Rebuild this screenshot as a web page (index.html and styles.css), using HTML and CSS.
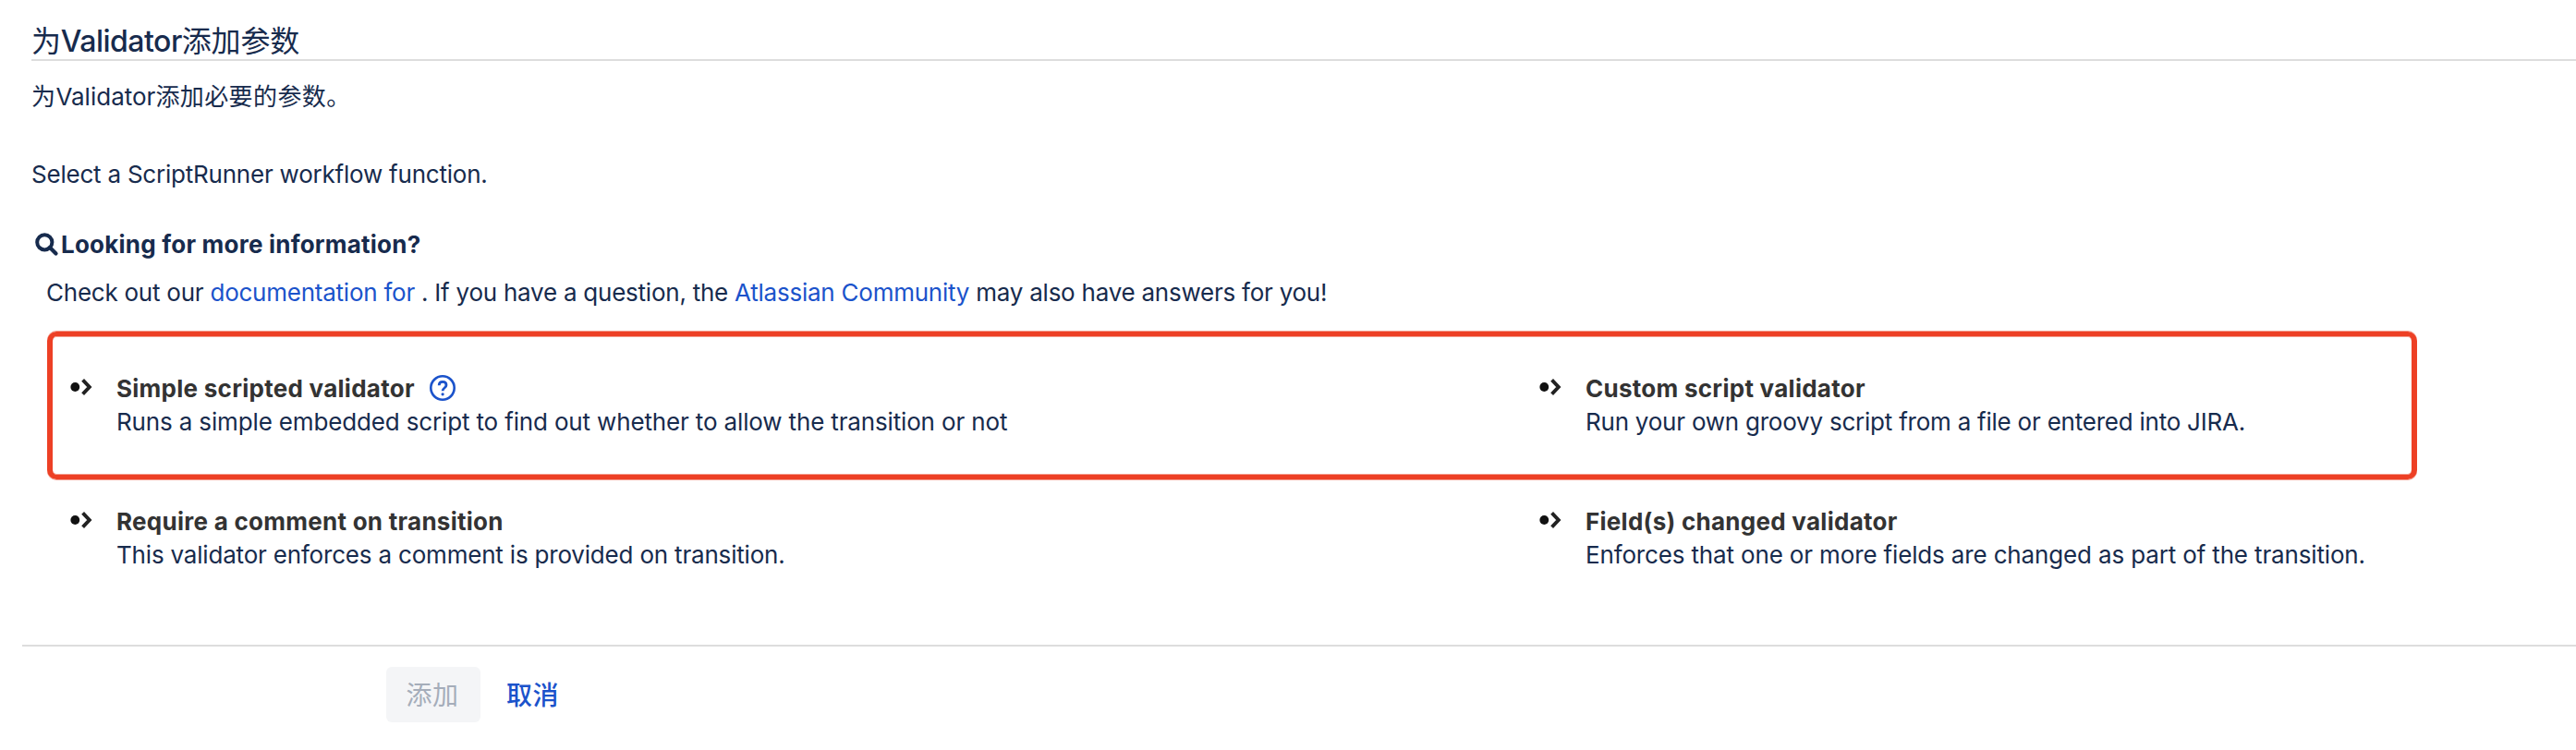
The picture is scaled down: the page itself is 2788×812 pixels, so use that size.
FILE: index.html
```html
<!DOCTYPE html>
<html lang="zh-CN">
<head>
<meta charset="utf-8">
<title>为Validator添加参数</title>
<link rel="stylesheet" href="styles.css">
</head>
<body>
<svg class="defs" aria-hidden="true">
  <symbol id="bullet" viewBox="0 0 28 24">
    <circle cx="7.3" cy="12" r="4.9" fill="#111"/>
    <path d="M15.6 4.4l7.2 7.6-7.2 7.6" fill="none" stroke="#222" stroke-width="3.9"/>
  </symbol>
</svg>
<main class="page">
  <h2 class="title">为<span class="title-latin">Validator</span>添加参数</h2>
  <p class="desc"><span class="cjk">为</span>Validator<span class="cjk">添加必要的参数。</span></p>
  <p class="prompt">Select a ScriptRunner workflow function.</p>
  <h3 class="info-title">
    <svg class="search" viewBox="0 0 26 26"><circle cx="10.3" cy="10.3" r="8.1" fill="none" stroke="currentColor" stroke-width="4"/><path d="M16 16l6.5 6.5" stroke="currentColor" stroke-width="4.2" stroke-linecap="round"/></svg>
    <span>Looking for more information?</span>
  </h3>
  <p class="info">Check out our <a href="#">documentation for</a> . If you have a question, the <a href="#">Atlassian Community</a> may also have answers for you!</p>
  <section class="row highlighted">
    <article class="option">
      <svg class="bullet"><use href="#bullet"/></svg>
      <div>
        <h4 class="name">Simple scripted validator
          <svg class="help" viewBox="0 0 28 28"><circle cx="14" cy="14" r="12.7" fill="none" stroke="currentColor" stroke-width="2.6"/><path d="M10.2 11.2c0-2.3 1.6-3.8 3.9-3.8s3.9 1.5 3.9 3.6c0 3-3.9 3-3.9 6.2" fill="none" stroke="currentColor" stroke-width="2.8"/><circle cx="14.1" cy="20.8" r="1.6" fill="currentColor"/></svg>
        </h4>
        <p class="text loose">Runs a simple embedded script to find out whether to allow the transition or not</p>
      </div>
    </article>
    <article class="option">
      <svg class="bullet"><use href="#bullet"/></svg>
      <div>
        <h4 class="name">Custom script validator</h4>
        <p class="text tight">Run your own groovy script from a file or entered into JIRA.</p>
      </div>
    </article>
  </section>
  <section class="row">
    <article class="option">
      <svg class="bullet"><use href="#bullet"/></svg>
      <div>
        <h4 class="name">Require a comment on transition</h4>
        <p class="text">This validator enforces a comment is provided on transition.</p>
      </div>
    </article>
    <article class="option">
      <svg class="bullet"><use href="#bullet"/></svg>
      <div>
        <h4 class="name">Field(s) changed validator</h4>
        <p class="text loose">Enforces that one or more fields are changed as part of the transition.</p>
      </div>
    </article>
  </section>
</main>
<footer class="actions">
  <button class="add" disabled>添加</button>
  <a class="cancel" href="#">取消</a>
</footer>
</body>
</html>
```

FILE: styles.css
```css
* { box-sizing: border-box; }
body {
  margin: 0;
  height: 812px;
  overflow: hidden;
  background: #fff;
  color: #172b4d;
  font: 400 26px/36px Inter, "Noto Sans CJK SC", sans-serif;
  letter-spacing: -0.22px;
}
h2, h3, h4, p { margin: 0; }
a { color: #1b53cb; text-decoration: none; }
.defs { display: block; width: 0; height: 0; }
.page { padding: 25px 0 0 34px; }
.title {
  height: 41px;
  border-bottom: 2px solid #ddd;
  font-size: 32px;
  line-height: 40px;
  font-weight: 400;
  letter-spacing: -0.2px;
}
.title-latin { font-weight: 500; letter-spacing: -0.5px; }
.desc { margin-top: 21px; letter-spacing: 0; }
.cjk { letter-spacing: 0.4px; }
.prompt { margin-top: 48px; }
.info-title {
  display: flex;
  gap: 2px;
  margin-top: 40px;
  padding-left: 4px;
  font-size: 26px;
  font-weight: 700;
  letter-spacing: 0.22px;
}
.search { width: 26px; height: 26px; margin-top: 5px; }
.info { margin: 16px 0 24px; padding-left: 16px; letter-spacing: -0.24px; }
.row {
  display: grid;
  grid-template-columns: 1590px 1fr;
  width: 2565px;
  margin-left: 17px;
  padding: 28px 0 0 23px;
}
.highlighted {
  height: 160px;
  padding: 39px 0 0 17px;
  border: 5px solid #ed4025;
  border-width: 5px 6px;
  border-radius: 10px;
  box-shadow: 0 1px #f49b8c, 0 -1px #f49b8c, inset 0 1px #f49b8c, inset 0 -1px #f49b8c;
}
.option { display: flex; gap: 24px; }
.bullet { width: 28px; height: 24px; margin-top: 4px; }
.name {
  display: flex;
  align-items: center;
  gap: 16px;
  color: #333;
  font-size: 26px;
  font-weight: 700;
  letter-spacing: 0.27px;
}
.help { width: 28px; height: 28px; margin-bottom: 2px; color: #1b53cb; }
.text { letter-spacing: -0.19px; }
.loose { letter-spacing: -0.15px; }
.tight { letter-spacing: -0.23px; }
.actions {
  display: flex;
  align-items: center;
  gap: 28px;
  margin: 79px 0 0 24px;
  padding: 22px 0 0 394px;
  border-top: 2px solid #ddd;
  font-size: 28px;
  letter-spacing: 0;
}
.add {
  width: 102px;
  height: 60px;
  border: 0;
  border-radius: 6px;
  padding: 2px 2px 0 0;
  background: #f4f5f7;
  color: #a5adba;
  font: inherit;
  letter-spacing: 0.4px;
}
.cancel { padding-top: 2px; font-weight: 500; letter-spacing: 0.4px; }
```
